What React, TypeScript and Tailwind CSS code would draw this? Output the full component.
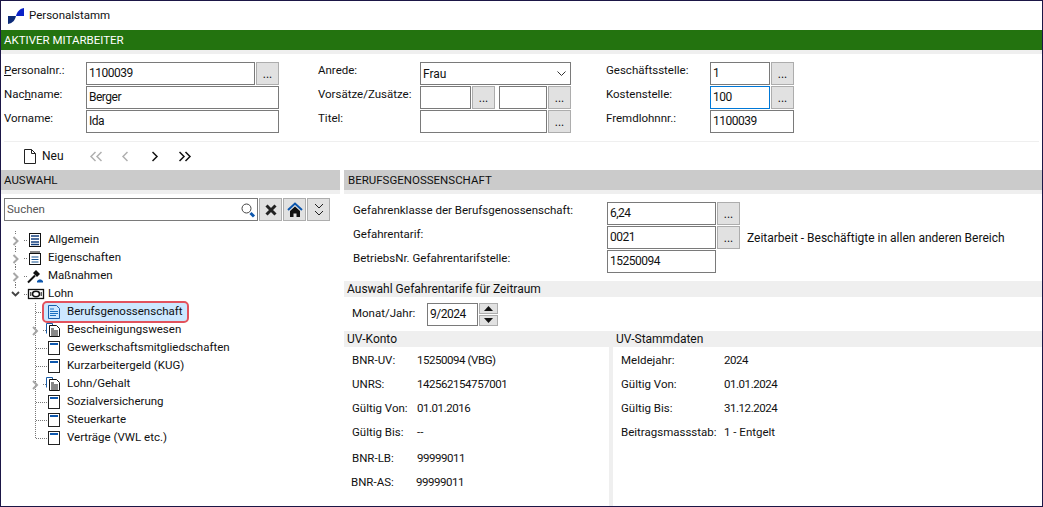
import type { ReactNode } from "react";

function Dots() {
  return (
    <button className="flex h-[23px] w-[23px] shrink-0 items-end justify-center border border-[#adadad] bg-[#e1e1e1] pb-[3px] text-[12px] leading-[14px]">
      ...
    </button>
  );
}

function Field({ value = "", width, focused }: { value?: string; width: string; focused?: boolean }) {
  return (
    <div className={`flex h-[23px] shrink-0 items-center border px-[2px] pb-[1px] text-[12px] tracking-[-0.5px] ${width} ${focused ? "border-[#0078d7]" : "border-[#7a7a7a]"}`}>
      {value}
    </div>
  );
}

function FormRow({ label, labelWidth, children }: { label: ReactNode; labelWidth: string; children: ReactNode }) {
  return (
    <div className="flex h-[23px] items-center">
      <div className={`shrink-0 pb-[7px] text-[11.5px] leading-[18px] ${labelWidth}`}>{label}</div>
      <div className="flex items-center gap-[1px]">{children}</div>
    </div>
  );
}

function LogoIcon() {
  return (
    <svg width="16" height="16" viewBox="0 0 16 16" className="shrink-0">
      <path d="M16 0C11 1 9 4 8 8h8z" fill="#0a22c8" />
      <path d="M0 8h8c-1 4-3 7-8 8z" fill="#0c2a78" />
    </svg>
  );
}

function SubHeader({ children }: { children: ReactNode }) {
  return <div className="flex h-[16px] items-center bg-[#efefef] px-[3px] text-[12px]">{children}</div>;
}

function ToolButton({ children }: { children: ReactNode }) {
  return <button className="flex h-[23px] w-[23px] items-center justify-center border border-[#adadad] bg-[#e1e1e1]">{children}</button>;
}

function NavArrow({ d, width, color }: { d: string; width: number; color: string }) {
  return (
    <svg width={width} height="11" viewBox={`0 0 ${width} 11`} className="shrink-0">
      <path d={d} fill="none" stroke={color} strokeWidth="1.5" />
    </svg>
  );
}

type NodeIcon = "list" | "notes" | "gavel" | "money" | "doc" | "docs" | "page";

function TreeIcon({ kind }: { kind: NodeIcon }) {
  return (
    <svg width="14" height="14" viewBox="0 0 14 14" className="shrink-0 overflow-visible">
      {kind === "page" && (
        <>
          <rect x=".5" y=".5" width="11" height="13" fill="none" stroke="#222" />
          <path d="M2 3h8" stroke="#0c56ad" strokeWidth="2" />
        </>
      )}
      {kind === "doc" && (
        <>
          <path d="M.5 .5h8l3 3v10H.5z" fill="none" stroke="#1a5da8" />
          <path d="M2 4h4M2 6.500h8M2 8.500h8M2 10.500h6" stroke="#1a6fc0" />
        </>
      )}
      {kind === "docs" && (
        <>
          <path d="M-1.500 10.500V.5h6v2" fill="none" stroke="#1a5da8" />
          <path d="M1.500 2.500h7l3 3v8h-10z" fill="#fff" stroke="#111" />
          <path d="M3 6h3M3 8h7M3 10h7M3 12h7" stroke="#111" />
        </>
      )}
      {kind === "list" && (
        <>
          <rect x=".5" y=".5" width="11" height="13" fill="none" stroke="#111" />
          <path d="M2 3h8M2 6h8M2 9h8M2 11.500h8" stroke="#14407f" strokeWidth="1.700" />
        </>
      )}
      {kind === "notes" && (
        <>
          <rect x=".5" y="2.500" width="11" height="11" fill="none" stroke="#111" />
          <path d="M2 0v3M4 0v3M6 0v3M8 0v3M10 0v3" stroke="#111" />
          <path d="M2.500 6h7M2.500 8.500h7M2.500 11h7" stroke="#14508f" />
        </>
      )}
      {kind === "gavel" && (
        <>
          <path d="M-1 13.500l7-7" stroke="#111" strokeWidth="2" />
          <path d="M4 4l3-3 4 4-3 3z" fill="#111" />
          <path d="M8 13.500h6V12l-2-1.500h-2L8 12z" fill="#0c56ad" />
        </>
      )}
      {kind === "money" && (
        <>
          <rect x="-.5" y="2.500" width="15" height="9" fill="none" stroke="#111" strokeWidth="1.300" />
          <ellipse cx="7" cy="7" rx="3.500" ry="2.700" fill="none" stroke="#111" strokeWidth="1.500" />
          <path d="M1.800 5v4M12.200 5v4" stroke="#111" />
        </>
      )}
    </svg>
  );
}

type TreeNode = { label: string; icon: NodeIcon; level: 0 | 1; mode?: "closed" | "open"; last?: boolean; selected?: boolean };

const tree: TreeNode[] = [
  { label: "Allgemein", icon: "list", level: 0, mode: "closed" },
  { label: "Eigenschaften", icon: "notes", level: 0, mode: "closed" },
  { label: "Maßnahmen", icon: "gavel", level: 0, mode: "closed" },
  { label: "Lohn", icon: "money", level: 0, mode: "open", last: true },
  { label: "Berufsgenossenschaft", icon: "doc", level: 1, selected: true },
  { label: "Bescheinigungswesen", icon: "docs", level: 1, mode: "closed" },
  { label: "Gewerkschaftsmitgliedschaften", icon: "page", level: 1 },
  { label: "Kurzarbeitergeld (KUG)", icon: "page", level: 1 },
  { label: "Lohn/Gehalt", icon: "docs", level: 1, mode: "closed" },
  { label: "Sozialversicherung", icon: "page", level: 1 },
  { label: "Steuerkarte", icon: "page", level: 1 },
  { label: "Verträge (VWL etc.)", icon: "page", level: 1, last: true },
];

function Guides({ node }: { node: TreeNode }) {
  const dot = { stroke: "#777", strokeDasharray: "1 1" };
  if (node.level === 0) {
    return (
      <svg width="25" height="18" viewBox="0 0 25 18" className="shrink-0">
        <path d={node.mode === "open" ? "M11.500 0v3" : "M11.500 0v3M11.500 15v3"} {...dot} />
        <path d="M20 9.500h4" {...dot} />
        {node.mode === "open" ? (
          <path d="M8 7l3.500 3.500L15 7" fill="none" stroke="#444" strokeWidth="1.800" />
        ) : (
          <path d="M9.500 6l4 4-4 4" fill="none" stroke="#a6a6a6" strokeWidth="2" />
        )}
      </svg>
    );
  }
  return (
    <svg width="44" height="18" viewBox="0 0 44 18" className="shrink-0">
      <path d={node.last ? "M31.500 0v9" : "M31.500 0v18"} {...dot} />
      <path d={node.mode ? "M39 9.500h4" : "M32 9.500h12"} {...dot} />
      {node.mode && <path d="M29 6l4 4-4 4" fill="none" stroke="#a6a6a6" strokeWidth="2" />}
    </svg>
  );
}

function TreeRow({ node }: { node: TreeNode }) {
  return (
    <div className="flex h-[18px] items-center">
      <Guides node={node} />
      <div className={`flex h-[18px] items-center gap-[5px] ${node.selected ? "-ml-[4px] rounded-[3px] bg-[#cce8ff] pr-[4px] pl-[4px] outline-2 outline-[#e2535d]" : ""}`}>
        <TreeIcon kind={node.icon} />
        <span className="text-[11.5px] whitespace-nowrap">{node.label}</span>
      </div>
    </div>
  );
}

function InfoRow({ label, value, width, className = "" }: { label: string; value: string; width: string; className?: string }) {
  return (
    <div className={`flex h-[24px] items-center text-[11.5px] ${className}`}>
      <span className={`shrink-0 ${width}`}>{label}</span>
      <span className={/^\d\d/.test(value) ? "tracking-[-0.45px]" : ""}>{value}</span>
    </div>
  );
}

export default function App() {
  return (
    <div className="flex h-[507px] w-[1043px] flex-col overflow-hidden border border-[#1b1646] bg-white [font-family:Roboto,sans-serif] text-[#111]">
      <div className="flex h-[29px] items-center gap-[5px] pl-[7px] text-[11.5px]">
        <LogoIcon />
        Personalstamm
      </div>
      <div className="flex h-[20px] items-center bg-[#23730f] px-[3px] pt-[1px] text-[11.5px] text-white">AKTIVER MITARBEITER</div>
      <div className="h-[4px] bg-[#efefef]" />

      <div className="flex pt-[8px] pb-[8px] pl-[3px]">
        <div className="flex w-[314px] flex-col gap-[1px]">
          <FormRow label={<><u>P</u>ersonalnr.:</>} labelWidth="w-[82px]">
            <Field value="1100039" width="w-[169px]" />
            <Dots />
          </FormRow>
          <FormRow label={<>Nac<u>h</u>name:</>} labelWidth="w-[82px]">
            <Field value="Berger" width="w-[193px]" />
          </FormRow>
          <FormRow label="Vorname:" labelWidth="w-[82px]">
            <Field value="Ida" width="w-[193px]" />
          </FormRow>
        </div>
        <div className="flex w-[288px] flex-col gap-[1px]">
          <FormRow label="Anrede:" labelWidth="w-[102px]">
            <div className="flex h-[23px] w-[151px] items-center justify-between border border-[#7a7a7a] pr-[4px] pl-[2px] text-[12px]">
              Frau
              <svg width="9" height="6" viewBox="0 0 9 6">
                <path d="M.5 .5l4 4 4-4" fill="none" stroke="#333" />
              </svg>
            </div>
          </FormRow>
          <FormRow label="Vorsätze/Zusätze:" labelWidth="w-[102px]">
            <Field width="w-[51px]" />
            <Dots />
            <Field width="w-[48px] ml-[3px]" />
            <Dots />
          </FormRow>
          <FormRow label="Titel:" labelWidth="w-[102px]">
            <Field width="w-[127px]" />
            <Dots />
          </FormRow>
        </div>
        <div className="flex flex-col gap-[1px]">
          <FormRow label="Geschäftsstelle:" labelWidth="w-[104px]">
            <Field value="1" width="w-[60px]" />
            <Dots />
          </FormRow>
          <FormRow label="Kostenstelle:" labelWidth="w-[104px]">
            <Field value="100" width="w-[60px]" focused />
            <Dots />
          </FormRow>
          <FormRow label="Fremdlohnnr.:" labelWidth="w-[104px]">
            <Field value="1100039" width="w-[84px]" />
          </FormRow>
        </div>
      </div>

      <div className="mx-[3px] h-px bg-[#efefef]" />

      <div className="flex h-[28px] items-center pl-[23px] text-[12px]">
        <svg width="12" height="15" viewBox="0 0 12 15" className="shrink-0">
          <path d="M.5 .5h7l4 4v10H.5zM7.500 .5v4h4" fill="none" stroke="#222" />
        </svg>
        <span className="ml-[6px] w-[21px]">Neu</span>
        <div className="ml-[26px]"><NavArrow d="M6.500 1l-4.500 4.500 4.500 4.500M12.500 1l-4.500 4.500 4.500 4.500" width={13} color="#b0b0b0" /></div>
        <div className="ml-[19px]"><NavArrow d="M6.500 1l-4.500 4.500 4.500 4.500" width={7} color="#b0b0b0" /></div>
        <div className="ml-[24px]"><NavArrow d="M.5 1l4.500 4.500L.5 10" width={7} color="#111" /></div>
        <div className="ml-[20px]"><NavArrow d="M.5 1l4.500 4.500L.5 10M6.500 1l4.500 4.500L6.500 10" width={13} color="#111" /></div>
      </div>

      <div className="flex min-h-0 flex-1 gap-[4px]">
        <div className="flex w-[339px] flex-col">
          <div className="flex h-[20px] items-center bg-[#cbcbcb] px-[3px] pt-[1px] text-[11.5px]">AUSWAHL</div>
          <div className="h-[4px] bg-[#efefef]" />
          <div className="flex items-center gap-[1px] pt-[4px] pl-[3px]">
            <div className="flex h-[23px] w-[254px] items-center justify-between border border-[#7a7a7a] pr-0 pl-[2px] text-[11.5px] text-[#555]">
              Suchen
              <svg width="18" height="18" viewBox="0 0 18 18">
                <circle cx="7.500" cy="7.500" r="4.500" fill="none" stroke="#444" />
                <path d="M11.500 12l3.500 3.500" stroke="#0c56ad" strokeWidth="3" />
              </svg>
            </div>
            <ToolButton>
              <svg width="12" height="12" viewBox="0 0 12 12">
                <path d="M1.500 1.500l9 9M10.500 1.500l-9 9" stroke="#222" strokeWidth="3" />
              </svg>
            </ToolButton>
            <ToolButton>
              <svg width="16" height="16" viewBox="0 0 16 16">
                <path d="M1 8l7-6.500L15 8" fill="none" stroke="#0c56ad" strokeWidth="2" />
                <path d="M3 9l5-4.500L13 9v6H9.500v-3.500h-3V15H3z" fill="#111" />
              </svg>
            </ToolButton>
            <ToolButton>
              <svg width="10" height="13" viewBox="0 0 10 13">
                <path d="M1 1l4 4 4-4M1 8l4 4 4-4" fill="none" stroke="#222" />
              </svg>
            </ToolButton>
          </div>
          <div className="flex flex-col pt-[10px] pl-[3px]">
            {tree.map((node) => (
              <TreeRow key={node.label} node={node} />
            ))}
          </div>
        </div>

        <div className="flex min-w-0 flex-1 flex-col">
          <div className="flex h-[20px] items-center bg-[#cbcbcb] px-[4px] pt-[1px] text-[11.5px]">BERUFSGENOSSENSCHAFT</div>
          <div className="h-[4px] bg-[#efefef]" />
          <div className="flex flex-col gap-[1px] pt-[8px] pb-[8px] pl-[9px]">
            <FormRow label="Gefahrenklasse der Berufsgenossenschaft:" labelWidth="w-[254px]">
              <Field value="6,24" width="w-[109px]" />
              <Dots />
            </FormRow>
            <FormRow label="Gefahrentarif:" labelWidth="w-[254px]">
              <Field value="0021" width="w-[109px]" />
              <Dots />
              <span className="ml-[6px] text-[12px] whitespace-nowrap">Zeitarbeit - Beschäftigte in allen anderen Bereich</span>
            </FormRow>
            <FormRow label="BetriebsNr. Gefahrentarifstelle:" labelWidth="w-[254px]">
              <Field value="15250094" width="w-[109px]" />
            </FormRow>
          </div>
          <SubHeader>Auswahl Gefahrentarife für Zeitraum</SubHeader>
          <div className="flex h-[34px] items-center pl-[8px]">
            <span className="w-[75px] text-[11.5px]">Monat/Jahr:</span>
            <Field value="9/2024" width="w-[51px]" />
            <div className="ml-[1px] flex h-[23px] w-[19px] flex-col gap-[1px]">
              <div className="flex flex-1 items-center justify-center border border-[#adadad] bg-[#e1e1e1]">
                <svg width="9" height="5" viewBox="0 0 9 5"><path d="M4.500 0L9 5H0z" fill="#111" /></svg>
              </div>
              <div className="flex flex-1 items-center justify-center border border-[#adadad] bg-[#e1e1e1]">
                <svg width="9" height="5" viewBox="0 0 9 5"><path d="M0 0h9L4.500 5z" fill="#111" /></svg>
              </div>
            </div>
          </div>
          <div className="flex min-h-0 flex-1 gap-[4px] bg-[#efefef]">
            <div className="flex w-[265px] flex-col">
              <SubHeader>UV-Konto</SubHeader>
              <div className="flex flex-1 flex-col bg-white pt-[2px] pl-[8px]">
                <InfoRow label="BNR-UV:" value="15250094 (VBG)" width="w-[65px]" />
                <InfoRow label="UNRS:" value="142562154757001" width="w-[65px]" />
                <InfoRow label="Gültig Von:" value="01.01.2016" width="w-[65px]" />
                <InfoRow label="Gültig Bis:" value="--" width="w-[65px]" />
                <InfoRow label="BNR-LB:" value="99999011" width="w-[65px]" className="mt-[2px]" />
                <InfoRow label="BNR-AS:" value="99999011" width="w-[65px]" className="-ml-[1px]" />
              </div>
            </div>
            <div className="flex flex-1 flex-col">
              <SubHeader>UV-Stammdaten</SubHeader>
              <div className="flex flex-1 flex-col bg-white pt-[2px] pl-[8px]">
                <InfoRow label="Meldejahr:" value="2024" width="w-[103px]" />
                <InfoRow label="Gültig Von:" value="01.01.2024" width="w-[103px]" />
                <InfoRow label="Gültig Bis:" value="31.12.2024" width="w-[103px]" />
                <InfoRow label="Beitragsmassstab:" value="1 - Entgelt" width="w-[103px]" />
              </div>
            </div>
          </div>
        </div>
      </div>
    </div>
  );
}
